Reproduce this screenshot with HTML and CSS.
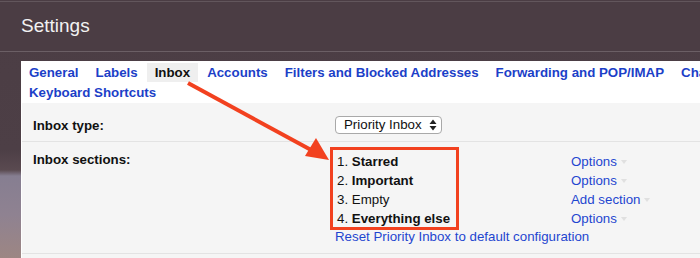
FILE: index.html
```html
<!DOCTYPE html>
<html>
<head>
<meta charset="utf-8">
<link rel="stylesheet" href="styles.css">
</head>
<body>
<header class="topbar">
  <h1 class="title">Settings</h1>
</header>
<main class="panel">
  <nav class="tabs">
    <div class="tab-row">
      <a class="tab">General</a>
      <a class="tab">Labels</a>
      <a class="tab tab-active">Inbox</a>
      <a class="tab">Accounts</a>
      <a class="tab">Filters and Blocked Addresses</a>
      <a class="tab">Forwarding and POP/IMAP</a>
      <a class="tab">Chat</a>
    </div>
    <div class="tab-row">
      <a class="tab">Keyboard Shortcuts</a>
    </div>
  </nav>
  <section class="content">
    <div class="row row-type">
      <div class="label">Inbox type:</div>
      <div class="value">
        <span class="select">Priority Inbox
          <svg class="updown" width="8" height="12" viewBox="0 0 8 12"><path d="M4 0.5 L7.5 5 H0.5 Z M4 11.5 L7.5 7 H0.5 Z" fill="#222"/></svg>
        </span>
      </div>
    </div>
    <div class="row row-sections">
      <div class="label">Inbox sections:</div>
      <div class="value sections">
        <div class="section-list">
          <div class="item"><span class="num">1.</span> <b>Starred</b></div>
          <a class="opt">Options<span class="caret"></span></a>
          <div class="item"><span class="num">2.</span> <b>Important</b></div>
          <a class="opt">Options<span class="caret"></span></a>
          <div class="item"><span class="num">3.</span> Empty</div>
          <a class="opt">Add section<span class="caret"></span></a>
          <div class="item"><span class="num">4.</span> <b>Everything else</b></div>
          <a class="opt">Options<span class="caret"></span></a>
        </div>
        <a class="reset">Reset Priority Inbox to default configuration</a>
        <div class="highlight"></div>
      </div>
    </div>
    <div class="row row-rest"></div>
  </section>
</main>
<svg class="arrow" width="700" height="258" viewBox="0 0 700 258">
  <line x1="188" y1="83" x2="313" y2="151" stroke="#f2411f" stroke-width="4"/>
  <polygon points="329,160 305,156 316,138" fill="#f2411f"/>
</svg>
</body>
</html>
```

FILE: styles.css
```css
html, body {
  margin: 0;
  padding: 0;
  width: 700px;
  height: 258px;
  overflow: hidden;
}
body {
  position: relative;
  padding-top: 1px;
  box-sizing: border-box;
  font-family: "Liberation Sans", Arial, Helvetica, sans-serif;
  font-size: 13.3px;
  color: #111;
  background: linear-gradient(to bottom, #4b3d44 0, #4d3f46 150px, #5a4a50 170px, #867e91 176px, #8f8291 215px, #9d8683 258px);
}
.topbar {
  height: 49px;
  border-top: 1px solid #62565c;
  border-bottom: 1px solid #6b5f65;
  background: #4b3d44;
  box-sizing: content-box;
}
.title {
  margin: 0;
  padding: 13px 0 0 21px;
  font-size: 19px;
  line-height: 22px;
  font-weight: normal;
  color: #f2f2f2;
}
.panel {
  margin: 9px 0 0 21px;
  width: 900px;
  background: #fff;
}
.tabs {
  padding: 2px 0 1px;
  margin-left: -0.5px;
}
.tab-row {
  display: flex;
  white-space: nowrap;
}
.tab-row + .tab-row {
  margin-top: 1px;
}
.tab {
  padding: 0 8.5px;
  line-height: 19px;
  font-weight: bold;
  color: #1c3fc8;
}
.tab-active {
  padding: 0 7.5px;
  margin: 0 1px;
  color: #111;
  background: #efefef;
}
.content {
  margin-left: 1px;
  background: #f5f5f5;
}
.row {
  display: grid;
  grid-template-columns: 302px 1fr;
  padding-left: 11px;
  border-bottom: 1px solid #e3e3e3;
}
.row-type {
  padding-top: 13px;
  padding-bottom: 6px;
}
.row-sections {
  padding-top: 8px;
  padding-bottom: 7px;
}
.row-rest {
  height: 4px;
  border-bottom: none;
}
.label {
  font-weight: bold;
  line-height: 19px;
  color: #111;
}
.value {
  position: relative;
}
.select {
  display: inline-flex;
  align-items: center;
  box-sizing: border-box;
  height: 18px;
  padding: 0 4px 0 8px;
  border: 1px solid #a9a9a9;
  border-radius: 4px;
  background: #fff;
  line-height: 16px;
  color: #111;
}
.updown {
  margin-left: 7px;
}
.sections {
  margin-top: 2px;
}
.section-list {
  display: grid;
  grid-template-columns: 236px auto;
  line-height: 19px;
}
.item {
  padding-left: 2px;
  color: #111;
}
.opt, .reset {
  color: #1f46d0;
}
.caret {
  display: inline-block;
  margin-left: 4px;
  vertical-align: middle;
  border-top: 4px solid #e0e0e0;
  border-left: 3px solid transparent;
  border-right: 3px solid transparent;
}
.reset {
  display: block;
  margin-top: -1px;
  line-height: 19px;
}
.highlight {
  position: absolute;
  left: -5px;
  top: -5px;
  width: 129px;
  height: 83px;
  box-sizing: border-box;
  border: 3px solid #f2411f;
}
.arrow {
  position: absolute;
  left: 0;
  top: 0;
}
```
